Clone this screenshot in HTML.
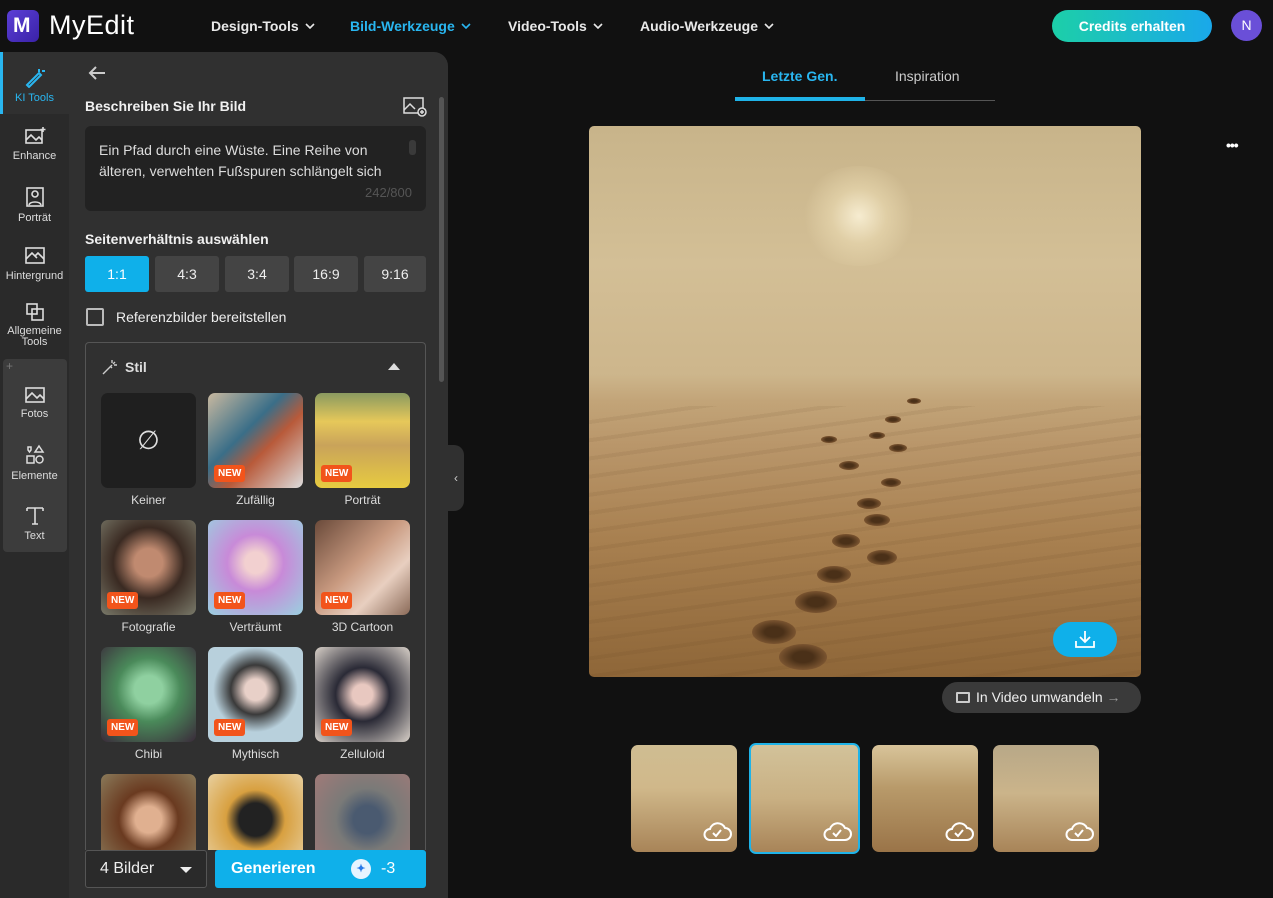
<!DOCTYPE html>
<html><head><meta charset="utf-8"><style>
*{box-sizing:border-box;margin:0;padding:0}
body{width:1273px;height:898px;overflow:hidden;background:#111;font-family:"Liberation Sans",sans-serif;color:#fff;position:relative}
.top{position:absolute;left:0;top:0;width:1273px;height:52px;background:#111}
.logo{position:absolute;left:7px;top:10px;width:32px;height:32px;border-radius:6px;background:linear-gradient(135deg,#5b3fd6,#3a22a8)}
.logo span{position:absolute;left:6px;top:4px;font-weight:bold;font-size:21px;color:#fff}
.brand{position:absolute;left:49px;top:10px;font-size:27px;color:#fff;letter-spacing:.5px}
.nav{position:absolute;top:18px;font-size:14px;font-weight:bold;color:#e8e8e8}
.nav.a{color:#29b6f0}
.nav svg{margin-left:6px;vertical-align:2px}
.credits{position:absolute;left:1052px;top:10px;width:160px;height:32px;border-radius:16px;background:linear-gradient(90deg,#1ccfa8,#1aa8ea);text-align:center;line-height:32px;font-weight:bold;font-size:14px}
.av{position:absolute;left:1231px;top:10px;width:31px;height:31px;border-radius:50%;background:#6a4fd8;text-align:center;line-height:31px;font-size:14px}
.side{position:absolute;left:0;top:52px;width:69px;height:846px;background:#2a2a2a}
.panel{position:absolute;left:69px;top:52px;width:379px;height:846px;background:#303030;border-top-right-radius:14px}
.si{position:absolute;left:0;width:69px;text-align:center;font-size:11px;color:#ddd}
.si svg{display:block;margin:0 auto 4px}
.h{position:absolute;left:85px;font-weight:bold;font-size:14px;color:#f0f0f0}
.ta{position:absolute;left:85px;top:126px;width:341px;height:85px;background:#222;border-radius:6px;font-size:14px;color:#ddd;line-height:21px;padding:14px 14px}
.rb{position:absolute;top:256px;width:64px;height:36px;background:#444;border-radius:3px;text-align:center;line-height:36px;font-size:14px;color:#eee}
.stil{position:absolute;left:85px;top:342px;width:341px;height:520px;border:1px solid #555;border-bottom:none;border-radius:4px 4px 0 0}
.card{position:absolute;width:95px;height:95px;border-radius:7px;overflow:hidden}
.lbl{position:absolute;width:95px;text-align:center;font-size:12px;color:#ddd}
.new{position:absolute;left:6px;bottom:6px;background:#f2541b;color:#fff;font-size:10px;font-weight:bold;padding:3px 4px;border-radius:3px}
.thumb{position:absolute;top:745px;width:106px;height:107px;border-radius:7px;overflow:hidden}
.fp{position:absolute;border-radius:50%;background:radial-gradient(ellipse,#4a3018 30%,#7a5430 70%,rgba(0,0,0,0) 100%)}
.cl{position:absolute;top:820px}
</style></head><body>
<div class="top">
<div class="logo"><span>M</span></div>
<div class="brand">MyEdit</div>
<div class="nav" style="left:211px">Design-Tools<svg width="10" height="6" viewBox="0 0 10 6" fill="none" stroke="#e8e8e8" stroke-width="1.6"><path d="M1 1l4 4 4-4"/></svg></div>
<div class="nav a" style="left:350px">Bild-Werkzeuge<svg width="10" height="6" viewBox="0 0 10 6" fill="none" stroke="#29b6f0" stroke-width="1.6"><path d="M1 1l4 4 4-4"/></svg></div>
<div class="nav" style="left:508px">Video-Tools<svg width="10" height="6" viewBox="0 0 10 6" fill="none" stroke="#e8e8e8" stroke-width="1.6"><path d="M1 1l4 4 4-4"/></svg></div>
<div class="nav" style="left:640px">Audio-Werkzeuge<svg width="10" height="6" viewBox="0 0 10 6" fill="none" stroke="#e8e8e8" stroke-width="1.6"><path d="M1 1l4 4 4-4"/></svg></div>
<div class="credits">Credits erhalten</div>
<div class="av">N</div>
</div>
<div class="side">
<div style="position:absolute;left:0;top:0;width:69px;height:62px;background:#303030;border-left:3px solid #29b6f0"></div>
<div class="si" style="top:14px;color:#29b6f0"><svg width="22" height="22" viewBox="0 0 22 22" fill="none" stroke="#29b6f0" stroke-width="2"><path d="M3 19L15 7l2 2L5 21z M15 3v3 M18 5h3"/></svg>KI Tools</div>
<div class="si" style="top:74px"><svg width="22" height="20" viewBox="0 0 22 20" fill="none" stroke="#ddd" stroke-width="1.6"><rect x="2" y="4" width="16" height="13"/><path d="M2 14l5-5 5 5 3-3 3 3"/><path d="M19 1v5M16.5 3.5h5"/></svg>Enhance</div>
<div class="si" style="top:134px"><svg width="22" height="22" viewBox="0 0 22 22" fill="none" stroke="#ddd" stroke-width="1.6"><rect x="3" y="2" width="16" height="18"/><circle cx="11" cy="8" r="3"/><path d="M5 19c1-4 11-4 12 0"/></svg>Porträt</div>
<div class="si" style="top:194px"><svg width="22" height="20" viewBox="0 0 22 20" fill="none" stroke="#ddd" stroke-width="1.6"><rect x="2" y="2" width="18" height="15"/><path d="M2 13l6-6 5 5M11 10l3-3 6 6"/></svg>Hintergrund</div>
<div class="si" style="top:250px;line-height:11px"><svg width="20" height="20" viewBox="0 0 20 20" fill="none" stroke="#ddd" stroke-width="1.6"><rect x="2" y="2" width="10" height="10"/><rect x="7" y="7" width="11" height="11"/></svg>Allgemeine<br>Tools</div>
<div style="position:absolute;left:3px;top:307px;width:64px;height:193px;background:#3c3c3c;border-radius:4px"><span style="position:absolute;left:3px;top:0;color:#777;font-size:12px">+</span></div>
<div class="si" style="top:334px"><svg width="22" height="18" viewBox="0 0 22 18" fill="none" stroke="#ddd" stroke-width="1.6"><rect x="2" y="2" width="18" height="14"/><path d="M2 13l6-6 5 5 3-3 4 4"/></svg>Fotos</div>
<div class="si" style="top:392px"><svg width="22" height="22" viewBox="0 0 22 22" fill="none" stroke="#ddd" stroke-width="1.5"><path d="M4 3l3 0 0 3-1.5 2L4 6z"/><path d="M15 2l4 6h-8z"/><rect x="3" y="12" width="7" height="7"/><circle cx="15.5" cy="15.5" r="3.5"/></svg>Elemente</div>
<div class="si" style="top:452px"><svg width="22" height="22" viewBox="0 0 22 22" fill="none" stroke="#ddd" stroke-width="1.6"><path d="M3 4h16M11 4v16M3 4v3M19 4v3M8 20h6"/></svg>Text</div>
</div>
<div class="panel">
<div style="position:absolute;right:4px;top:45px;width:5px;height:285px;background:#555;border-radius:3px"></div>
</div>
<div style="position:absolute;left:448px;top:445px;width:16px;height:66px;background:#303030;border-radius:0 10px 10px 0;color:#ccc;font-size:12px;line-height:66px;text-align:center">‹</div>
<svg style="position:absolute;left:88px;top:65px" width="18" height="16" viewBox="0 0 18 16" fill="none" stroke="#ccc" stroke-width="2"><path d="M17 8H2M8 2L2 8l6 6"/></svg>
<div class="h" style="top:98px">Beschreiben Sie Ihr Bild</div>
<svg style="position:absolute;left:403px;top:97px" width="24" height="20" viewBox="0 0 24 20" fill="none" stroke="#ddd" stroke-width="1.5"><rect x="1" y="1" width="19" height="15"/><path d="M1 13l6-6 5 5"/><circle cx="19" cy="15" r="4" fill="#303030"/><path d="M19 13v4M17 15h4"/></svg>
<div class="ta">Ein Pfad durch eine Wüste. Eine Reihe von<br>älteren, verwehten Fußspuren schlängelt sich
<div style="position:absolute;right:10px;top:14px;width:7px;height:15px;border-radius:3px;background:#3a3a3a"></div>
<div style="position:absolute;right:14px;bottom:8px;color:#555;font-size:13px">242/800</div></div>
<div class="h" style="top:231px">Seitenverhältnis auswählen</div>
<div class="rb" style="left:85px;background:#0fb0ea;color:#fff">1:1</div>
<div class="rb" style="left:155px">4:3</div>
<div class="rb" style="left:225px">3:4</div>
<div class="rb" style="left:294px">16:9</div>
<div class="rb" style="left:364px;width:62px">9:16</div>
<div style="position:absolute;left:86px;top:308px;width:18px;height:18px;border:2px solid #bbb;border-radius:2px"></div>
<div style="position:absolute;left:116px;top:309px;font-size:14px;color:#eee">Referenzbilder bereitstellen</div>
<div class="stil"></div>
<svg style="position:absolute;left:101px;top:358px" width="18" height="18" viewBox="0 0 18 18" fill="none" stroke="#ccc" stroke-width="1.4"><path d="M2 16L11 7M11 2v3M14 4l-2 2M16 7h-3M10 9l1 1"/></svg>
<div style="position:absolute;left:125px;top:359px;font-size:14px;font-weight:bold;color:#ddd">Stil</div>
<div style="position:absolute;left:388px;top:363px;width:0;height:0;border-left:6px solid transparent;border-right:6px solid transparent;border-bottom:7px solid #ddd"></div>
<div class="card" style="left:101px;top:393px;background:#1f1f1f;color:#ddd;font-size:26px;text-align:center;line-height:95px">∅</div>
<div class="card" style="left:208px;top:393px;background:linear-gradient(135deg,#c9b9a0,#3a6e88 40%,#b85a3a 60%,#ddd)"><span class="new">NEW</span></div>
<div class="card" style="left:315px;top:393px;background:linear-gradient(180deg,#8a9a60,#e6c85a 30%,#c9a35a 55%,#e7cb40)"><span class="new">NEW</span></div>
<div class="lbl" style="left:101px;top:493px">Keiner</div>
<div class="lbl" style="left:208px;top:493px">Zufällig</div>
<div class="lbl" style="left:315px;top:493px">Porträt</div>
<div class="card" style="left:101px;top:520px;background:radial-gradient(circle at 50% 45%,#c08a70 20%,#3a2a22 50%,#7a7a6a)"><span class="new">NEW</span></div>
<div class="card" style="left:208px;top:520px;background:radial-gradient(circle at 50% 45%,#f2d0d0 15%,#c88ad8 40%,#9ad0e0)"><span class="new">NEW</span></div>
<div class="card" style="left:315px;top:520px;background:linear-gradient(135deg,#6a4a3a,#c99a80 45%,#e8cfc0 70%,#8a6a58)"><span class="new">NEW</span></div>
<div class="lbl" style="left:101px;top:620px">Fotografie</div>
<div class="lbl" style="left:208px;top:620px">Verträumt</div>
<div class="lbl" style="left:315px;top:620px">3D Cartoon</div>
<div class="card" style="left:101px;top:647px;background:radial-gradient(circle at 50% 45%,#8fd0a0 20%,#4a8a5a 45%,#3a2a3a)"><span class="new">NEW</span></div>
<div class="card" style="left:208px;top:647px;background:radial-gradient(circle at 50% 45%,#e8d0c8 15%,#3a3a3a 35%,#b8d0dc 60%)"><span class="new">NEW</span></div>
<div class="card" style="left:315px;top:647px;background:radial-gradient(circle at 50% 50%,#e8c8c0 15%,#2a2a36 40%,#d8d0c8)"><span class="new">NEW</span></div>
<div class="lbl" style="left:101px;top:747px">Chibi</div>
<div class="lbl" style="left:208px;top:747px">Mythisch</div>
<div class="lbl" style="left:315px;top:747px">Zelluloid</div>
<div class="card" style="left:101px;top:774px;height:76px;border-radius:7px 7px 0 0;background:radial-gradient(circle at 50% 60%,#e0b090 20%,#6a3a20 45%,#8a7a5a)"></div>
<div class="card" style="left:208px;top:774px;height:76px;border-radius:7px 7px 0 0;background:radial-gradient(circle at 50% 60%,#222 25%,#d8a040 45%,#e8d0a0)"></div>
<div class="card" style="left:315px;top:774px;height:76px;border-radius:7px 7px 0 0;background:radial-gradient(circle at 55% 60%,#4a5a70 20%,#7a7a78 45%,#a07a78)"></div>
<div style="position:absolute;left:69px;top:850px;width:379px;height:48px;background:#303030"></div>
<div style="position:absolute;left:85px;top:850px;width:122px;height:38px;border:1px solid #555;border-radius:3px;font-size:16px;color:#eee;line-height:36px;padding-left:14px;background:#2a2a2a">4 Bilder<span style="position:absolute;right:14px;top:16px;border-left:6px solid transparent;border-right:6px solid transparent;border-top:6px solid #eee"></span></div>
<div style="position:absolute;left:215px;top:850px;width:211px;height:38px;background:#0fb0ea;border-radius:3px;font-size:16px;font-weight:bold;line-height:38px;padding-left:16px">Generieren<span style="position:absolute;left:136px;top:9px;width:20px;height:20px;border-radius:50%;background:#e8f4ff;color:#2a7ae8;font-size:11px;line-height:20px;text-align:center">✦</span><span style="position:absolute;left:166px;font-weight:normal">-3</span></div>
<!-- main -->
<div style="position:absolute;left:762px;top:68px;font-size:14px;font-weight:bold;color:#29b6f0">Letzte Gen.</div>
<div style="position:absolute;left:895px;top:68px;font-size:14px;color:#ccc">Inspiration</div>
<div style="position:absolute;left:735px;top:100px;width:260px;height:1px;background:#555"></div>
<div style="position:absolute;left:735px;top:97px;width:130px;height:4px;background:#1fb3e8"></div>
<div style="position:absolute;left:1226px;top:137px;font-size:14px;letter-spacing:-1px;color:#fff;font-weight:bold">•••</div>
<div style="position:absolute;left:589px;top:126px;width:552px;height:551px;border-radius:5px;overflow:hidden;background:linear-gradient(180deg,#c8b48a 0%,#d3bf96 25%,#cdb68c 45%,#c2a478 50%,#b9966a 58%,#a88050 75%,#8e6638 100%)">
<div style="position:absolute;left:210px;top:40px;width:120px;height:100px;border-radius:50%;background:radial-gradient(circle,#f6ecd0 0%,rgba(240,225,185,.5) 35%,rgba(0,0,0,0) 70%)"></div>
<div style="position:absolute;left:0;top:280px;width:552px;height:271px;background:repeating-linear-gradient(172deg,rgba(0,0,0,0) 0 14px,rgba(80,50,20,.08) 14px 18px)"></div>
<div class="fp" style="left:318px;top:272px;width:14px;height:6px"></div>
<div class="fp" style="left:296px;top:290px;width:16px;height:7px"></div>
<div class="fp" style="left:280px;top:306px;width:16px;height:7px"></div>
<div class="fp" style="left:300px;top:318px;width:18px;height:8px"></div>
<div class="fp" style="left:232px;top:310px;width:16px;height:7px"></div>
<div class="fp" style="left:250px;top:335px;width:20px;height:9px"></div>
<div class="fp" style="left:292px;top:352px;width:20px;height:9px"></div>
<div class="fp" style="left:268px;top:372px;width:24px;height:11px"></div>
<div class="fp" style="left:275px;top:388px;width:26px;height:12px"></div>
<div class="fp" style="left:243px;top:408px;width:28px;height:14px"></div>
<div class="fp" style="left:278px;top:424px;width:30px;height:15px"></div>
<div class="fp" style="left:228px;top:440px;width:34px;height:17px"></div>
<div class="fp" style="left:206px;top:465px;width:42px;height:22px"></div>
<div class="fp" style="left:163px;top:494px;width:44px;height:24px"></div>
<div class="fp" style="left:190px;top:518px;width:48px;height:26px"></div>
<div style="position:absolute;left:464px;top:496px;width:64px;height:35px;border-radius:18px;background:#0fb0ea"></div>
<svg style="position:absolute;left:485px;top:503px" width="22" height="20" viewBox="0 0 22 20" fill="none" stroke="#fff" stroke-width="1.8"><path d="M11 2v11M6 8l5 5 5-5M2 12v6h18v-6"/></svg>
</div>
<div style="position:absolute;left:942px;top:682px;width:199px;height:31px;border-radius:16px;background:#3a3a3a;font-size:14px;color:#eee;line-height:31px;padding-left:34px">In Video umwandeln <span style="color:#999">→</span><span style="position:absolute;left:14px;top:10px;width:14px;height:11px;border:2px solid #ccc;border-radius:1px"></span></div>
<div class="thumb" style="left:631px;background:linear-gradient(180deg,#cfbd92,#d0b88a 40%,#a88458 100%)"></div>
<div class="thumb" style="left:749px;top:743px;width:111px;height:111px;border:2px solid #1fb3e8;background:linear-gradient(180deg,#d2c29a,#c9b083 50%,#a88458 100%)"></div>
<div class="thumb" style="left:872px;background:linear-gradient(180deg,#d8c49a,#b89a6a 40%,#9a7448 100%)"></div>
<div class="thumb" style="left:993px;background:linear-gradient(180deg,#b8a888,#cbb48a 45%,#a88458 100%)"></div>
<svg class="cl" style="left:702px" width="30" height="22" viewBox="0 0 30 22" fill="none" stroke="#fff" stroke-width="2"><path d="M8 20h15a6 6 0 0 0 0-12 8 8 0 0 0-15 1 5.5 5.5 0 0 0 0 11z"/><path d="M11 13l3 3 5-6"/></svg>
<svg class="cl" style="left:822px" width="30" height="22" viewBox="0 0 30 22" fill="none" stroke="#fff" stroke-width="2"><path d="M8 20h15a6 6 0 0 0 0-12 8 8 0 0 0-15 1 5.5 5.5 0 0 0 0 11z"/><path d="M11 13l3 3 5-6"/></svg>
<svg class="cl" style="left:944px" width="30" height="22" viewBox="0 0 30 22" fill="none" stroke="#fff" stroke-width="2"><path d="M8 20h15a6 6 0 0 0 0-12 8 8 0 0 0-15 1 5.5 5.5 0 0 0 0 11z"/><path d="M11 13l3 3 5-6"/></svg>
<svg class="cl" style="left:1064px" width="30" height="22" viewBox="0 0 30 22" fill="none" stroke="#fff" stroke-width="2"><path d="M8 20h15a6 6 0 0 0 0-12 8 8 0 0 0-15 1 5.5 5.5 0 0 0 0 11z"/><path d="M11 13l3 3 5-6"/></svg>
</body></html>
